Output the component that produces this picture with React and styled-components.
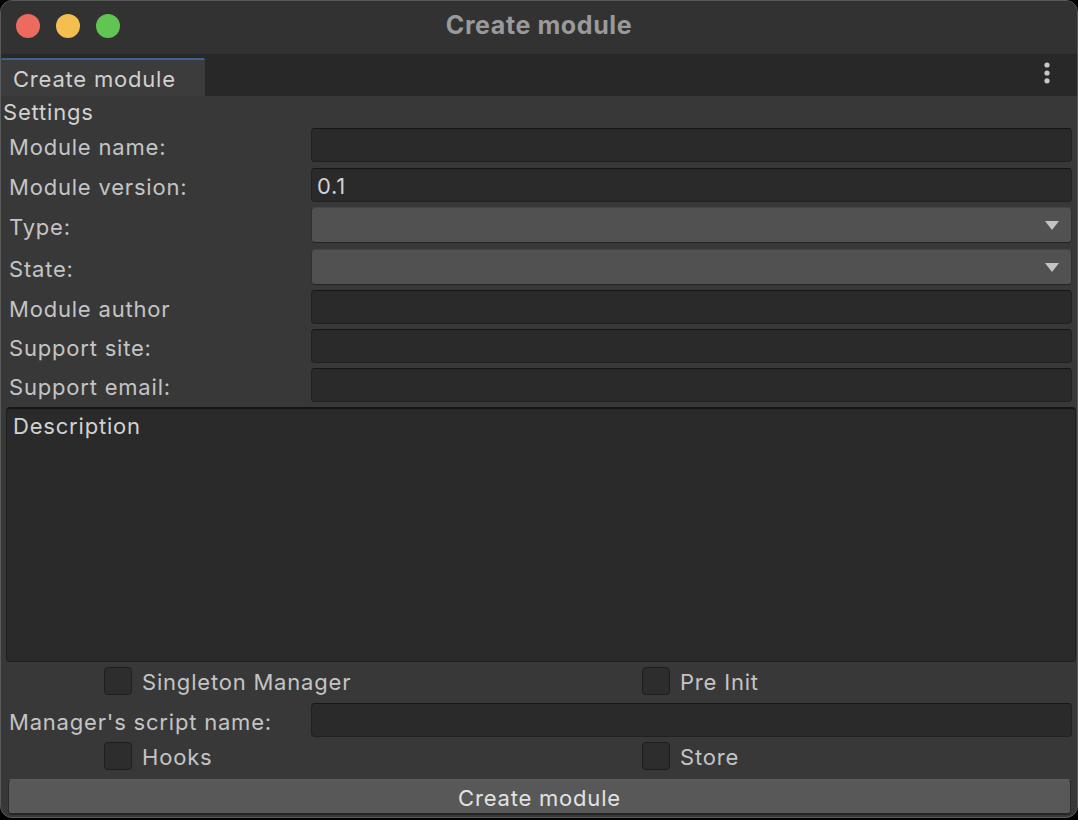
import React from "react";
import styled, { createGlobalStyle } from "styled-components";

const Global = createGlobalStyle`
  * { box-sizing: border-box; }
  html, body { margin: 0; padding: 0; background: #000; }
  body { font-family: Inter, "Noto Sans", sans-serif; }
`;

const Window = styled.div`
  width: 1078px;
  height: 818px;
  border: 1px solid #5a5a5a;
  border-radius: 12px;
  overflow: hidden;
  background: #383838;
  display: flex;
  flex-direction: column;
  font-size: 22px;
  letter-spacing: 0.8px;
`;

const TitleBar = styled.div`
  height: 53px;
  background: #323232;
  position: relative;
  display: flex;
  align-items: center;
  justify-content: center;
  flex-shrink: 0;
`;

const Lights = styled.div`
  position: absolute;
  left: 15px;
  top: 13px;
  display: flex;
  gap: 16px;
`;

const Light = styled.span`
  width: 24px;
  height: 24px;
  border-radius: 50%;
  background: ${(p) => p.$c};
`;

const Title = styled.div`
  color: #9a9a9a;
  font-weight: 700;
  font-size: 25px;
  letter-spacing: 0.6px;
  margin-top: -5px;
`;

const TabBar = styled.div`
  height: 42px;
  background: #282828;
  display: flex;
  align-items: flex-end;
  justify-content: space-between;
  flex-shrink: 0;
`;

const Tab = styled.div`
  width: 204px;
  height: 38px;
  background: #3c3c3c;
  border-top: 2px solid #3e6190;
  border-radius: 2px 2px 0 0;
  color: #d0d0d0;
  padding-left: 12px;
  display: flex;
  align-items: center;
  padding-top: 2px;
`;

const Kebab = styled.div`
  width: 40px;
  height: 38px;
  display: flex;
  align-items: center;
  justify-content: center;
  margin-right: 10px;
  padding-bottom: 8px;
`;

const Content = styled.div`
  display: flex;
  flex-direction: column;
  flex: 1;
`;

const SectionTitle = styled.div`
  color: #d2d2d2;
  height: 32px;
  padding-left: 2px;
  display: flex;
  align-items: center;
`;

const Row = styled.div`
  display: flex;
  align-items: center;
  padding: 0 5px 0 8px;
  height: ${(p) => p.$h || 34}px;
  margin-bottom: ${(p) => p.$mb ?? 5}px;
  margin-top: ${(p) => p.$mt ?? 0}px;
`;

const Label = styled.div`
  width: 302px;
  flex-shrink: 0;
  color: #c4c4c4;
  padding-top: 3px;
  white-space: nowrap;
`;

const TextField = styled.div`
  flex: 1;
  height: 100%;
  background: #2a2a2a;
  border: 1px solid #212121;
  border-top-color: #161616;
  border-radius: 4px;
  color: #d2d2d2;
  padding-left: 5px;
  display: flex;
  align-items: center;
  padding-top: 2px;
`;

const Dropdown = styled.div`
  flex: 1;
  height: 100%;
  background: #515151;
  border: 1px solid #303030;
  border-top-color: #454545;
  border-bottom-color: #242424;
  border-radius: 4px;
  display: flex;
  align-items: center;
  justify-content: flex-end;
  padding-right: 12px;
`;

const Description = styled.div`
  margin: 0 1px 0 5px;
  height: 255px;
  background: #2a2a2a;
  border: 1px solid #1f1f1f;
  border-top: 2px solid #151515;
  border-radius: 4px;
  color: #d2d2d2;
  padding: 4px 6px;
  flex-shrink: 0;
`;

const CheckRow = styled.div`
  display: grid;
  grid-template-columns: 538px 1fr;
  height: ${(p) => p.$h}px;
  align-items: center;
`;

const CheckItem = styled.label`
  display: flex;
  align-items: center;
  padding-left: 103px;
  color: #c4c4c4;
`;

const Box = styled.span`
  width: 28px;
  height: 28px;
  border-radius: 4px;
  background: #2d2d2d;
  border: 1px solid #1e1e1e;
  margin-right: 10px;
  flex-shrink: 0;
`;

const BoxText = styled.span`
  padding-top: 2px;
`;

const Button = styled.div`
  margin: 4px 6px 0 7px;
  height: 36px;
  background: #585858;
  border: 1px solid #2a2a2a;
  border-top-color: #5e5e5e;
  border-bottom: 2px solid #262626;
  border-radius: 4px;
  color: #e2e2e2;
  display: flex;
  align-items: center;
  justify-content: center;
  padding-top: 2px;
`;

const Caret = () => (
  <svg width="14" height="9" viewBox="0 0 14 9">
    <polygon points="0,0 14,0 7,9" fill="#c4c4c4" />
  </svg>
);

const Dots = () => (
  <svg width="6" height="22" viewBox="0 0 6 22">
    <circle cx="3" cy="3" r="2.6" fill="#c8c8c8" />
    <circle cx="3" cy="11" r="2.6" fill="#c8c8c8" />
    <circle cx="3" cy="18.8" r="2.6" fill="#c8c8c8" />
  </svg>
);

const Check = ({ children }) => (
  <CheckItem>
    <Box />
    <BoxText>{children}</BoxText>
  </CheckItem>
);

export default function App() {
  return (
    <>
      <Global />
      <Window>
        <TitleBar>
          <Lights>
            <Light $c="#ec6a5e" />
            <Light $c="#f4bf4f" />
            <Light $c="#61c554" />
          </Lights>
          <Title>Create module</Title>
        </TitleBar>
        <TabBar>
          <Tab>Create module</Tab>
          <Kebab>
            <Dots />
          </Kebab>
        </TabBar>
        <Content>
          <SectionTitle>Settings</SectionTitle>
          <Row $mb={6}>
            <Label>Module name:</Label>
            <TextField />
          </Row>
          <Row>
            <Label>Module version:</Label>
            <TextField>0.1</TextField>
          </Row>
          <Row $h={36} $mb={6}>
            <Label>Type:</Label>
            <Dropdown>
              <Caret />
            </Dropdown>
          </Row>
          <Row $h={36}>
            <Label>State:</Label>
            <Dropdown>
              <Caret />
            </Dropdown>
          </Row>
          <Row>
            <Label>Module author</Label>
            <TextField />
          </Row>
          <Row>
            <Label>Support site:</Label>
            <TextField />
          </Row>
          <Row>
            <Label>Support email:</Label>
            <TextField />
          </Row>
          <Description>Description</Description>
          <CheckRow $h={38}>
            <Check>Singleton Manager</Check>
            <Check>Pre Init</Check>
          </CheckRow>
          <Row $mt={3} $mb={0}>
            <Label>Manager's script name:</Label>
            <TextField />
          </Row>
          <CheckRow $h={38}>
            <Check>Hooks</Check>
            <Check>Store</Check>
          </CheckRow>
          <Button>Create module</Button>
        </Content>
      </Window>
    </>
  );
}
